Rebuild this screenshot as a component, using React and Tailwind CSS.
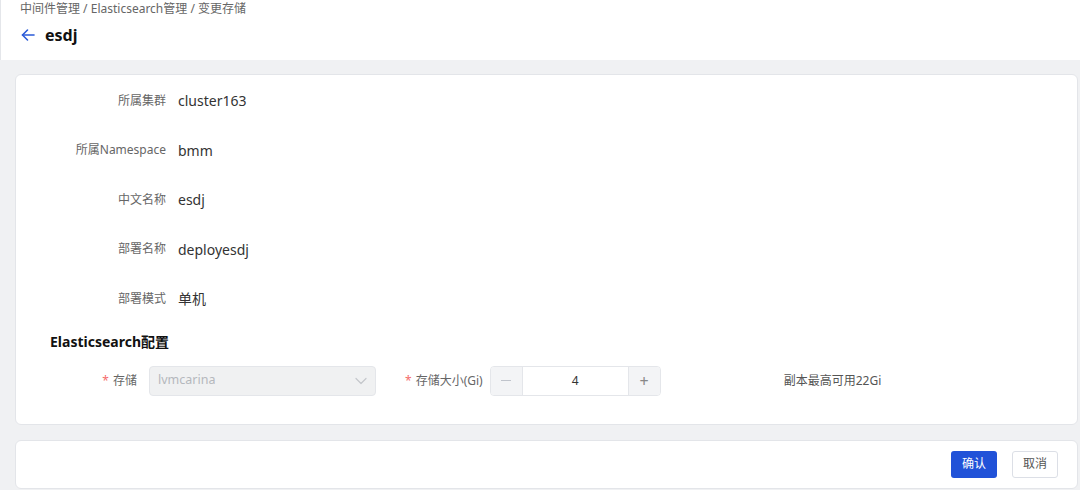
import React from "react";

const font = { fontFamily: '"Noto Sans", "Noto Sans CJK SC", sans-serif' };

const infoRows = [
  { label: "所属集群", value: "cluster163" },
  { label: "所属Namespace", value: "bmm" },
  { label: "中文名称", value: "esdj" },
  { label: "部署名称", value: "deployesdj" },
  { label: "部署模式", value: "单机" },
];

function ArrowLeft() {
  return (
    <svg width="14" height="14" viewBox="0 0 14 14" fill="none" stroke="#2b5bd8" strokeWidth="1.6" strokeLinecap="round" strokeLinejoin="round">
      <path d="M13 7H1.5" />
      <path d="M6.5 2L1.5 7l5 5" />
    </svg>
  );
}

function Chevron() {
  return (
    <svg width="12" height="8" viewBox="0 0 12 8" fill="none" stroke="#c4c7cc" strokeWidth="1.2" strokeLinecap="round" strokeLinejoin="round">
      <path d="M1 1.5l5 5 5-5" />
    </svg>
  );
}

export default function App() {
  return (
    <div className="w-[1080px] h-[490px] overflow-hidden bg-[#f0f1f3]" style={font}>
      {/* Header */}
      <div className="h-[60px] bg-white border-l border-[#e4e6ea] px-[19px] pt-[1px]">
        <div className="text-[12px] leading-[16px] text-[#666]">
          中间件管理 / Elasticsearch管理 / 变更存储
        </div>
        <div className="flex items-center gap-[10px] mt-[7px] pl-[1px]">
          <ArrowLeft />
          <span className="text-[16px] leading-[22px] font-bold text-[#111]">esdj</span>
        </div>
      </div>

      <div className="px-[15px] pt-[14px] pr-[2px]">
        {/* Main card */}
        <div className="bg-white border border-[#e3e5e9] rounded-[6px] pt-[1px] pb-[28px]">
          {infoRows.map((r) => (
            <div key={r.label} className="flex items-center h-[49.5px]">
              <div className="w-[150px] text-right text-[12px] text-[#666]">{r.label}</div>
              <div className="ml-[12px] text-[14px] text-[#333]">{r.value}</div>
            </div>
          ))}

          <div className="mt-[8px] pl-[34px] text-[14px] leading-[20px] font-bold text-[#111]">
            Elasticsearch配置
          </div>

          <div className="flex items-center mt-[14px] h-[30px]">
            <div className="w-[121px] text-right text-[12px] text-[#666]">
              <span className="text-[#f56c6c] mr-[4px]">*</span>存储
            </div>
            <div className="ml-[12px] w-[227px] h-[30px] rounded-[4px] border border-[#e4e6ea] bg-[#f0f1f2] flex items-center justify-between px-[8px]">
              <span className="text-[12.5px] text-[#b5b8bd]">lvmcarina</span>
              <Chevron />
            </div>

            <div className="ml-[29px] text-[12px] text-[#666]">
              <span className="text-[#f56c6c] mr-[4px]">*</span>存储大小(Gi)
            </div>
            <div className="ml-[7px] w-[171px] h-[30px] rounded-[4px] border border-[#e4e6ea] flex overflow-hidden">
              <div className="w-[32px] bg-[#f3f4f6] border-r border-[#e4e6ea] flex items-center justify-center">
                <div className="w-[10px] h-[1px] bg-[#c0c4cc]" />
              </div>
              <div className="flex-1 flex items-center justify-center text-[12px] text-[#333]">4</div>
              <div className="w-[32px] bg-[#f3f4f6] border-l border-[#e4e6ea] flex items-center justify-center text-[16px] text-[#888]">
                +
              </div>
            </div>

            <div className="ml-[123px] text-[12px] text-[#555]">副本最高可用22Gi</div>
          </div>
        </div>

        {/* Footer card */}
        <div className="mt-[15px] h-[49px] bg-white border border-[#e3e5e9] rounded-[6px] flex items-center justify-end gap-[15px] pr-[19px]">
          <button className="w-[46px] h-[27px] rounded-[3px] bg-[#2152d8] text-white text-[12px]">确认</button>
          <button className="w-[46px] h-[27px] rounded-[3px] border border-[#dcdfe6] bg-white text-[#555] text-[12px]">取消</button>
        </div>
      </div>
    </div>
  );
}
